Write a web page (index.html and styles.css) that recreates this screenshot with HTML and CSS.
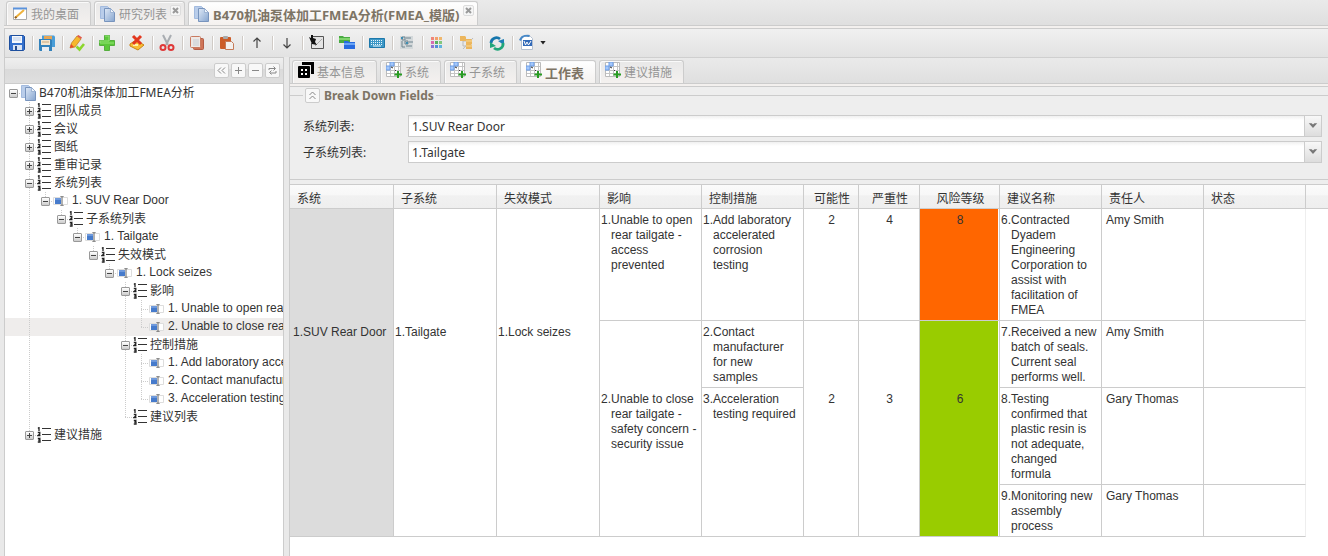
FILE: index.html
```
<!DOCTYPE html>
<html lang="zh-CN">
<head>
<meta charset="utf-8">
<title>FMEA</title>
<link rel="stylesheet" href="styles.css">
</head>
<body>
<svg class="defs" width="0" height="0" aria-hidden="true">
  <defs>
    <linearGradient id="page-blue" x1="0" y1="0" x2="1" y2="1"><stop offset="0" stop-color="#dfe9f7"/><stop offset="1" stop-color="#86a5cf"/></linearGradient>
    <symbol id="pages" viewBox="0 0 16 16">
      <path d="M.5.500h7l3 3v9h-10z" fill="#b9cdea" stroke="#a3bbdf"/>
      <path d="M4.500 2.500h6l4 4v9h-10z" fill="url(#page-blue)" stroke="#7894bd"/>
      <path d="M10.500 2.500v4h4z" fill="#eef4fb" stroke="#8aa4c8" stroke-width=".7"/>
    </symbol>
    <symbol id="list" viewBox="0 0 16 16">
      <path d="M1 1.500l1-1V4M.8 5.500h2V7L1 8.500h2.500M.8 11.500h2L2 13h1v2H.8" fill="none" stroke="#222" stroke-width="1.300"/>
      <path d="M5 1.500h9M5 7.500h9M5 13.500h9" stroke="#333" stroke-width="1.200"/>
    </symbol>
    <symbol id="field" viewBox="0 0 16 16">
      <path d="M.5 4.500h14v7H.5z" fill="#fff" stroke="#ddd"/>
      <path d="M2 5h6v6H2z" fill="#467bcc"/><path d="M2 5h6v2H2z" fill="#6e99dc"/>
      <path d="M7.500 3.500h1l.5.5.5-.5h1M9 4v8M7.500 12.500h1l.5-.5.5.5h1" fill="none" stroke="#666"/>
    </symbol>
    <symbol id="grid" viewBox="0 0 16 16">
      <path d="M.5.500h14v14H.5z" fill="#fff" stroke="#bbb"/>
      <path d="M4.500 1v13M8.500 1v13M12.500 1v13M1 4.500h13M1 8.500h13M1 11.500h13" stroke="#c5c5c5"/>
      <path d="M4 0h4v4H4zM0 4h4v4H0z" fill="#a4c8fb" stroke="#6d9de6"/>
      <path d="M5 5l2 1M9 8l1 1" stroke="#333"/>
      <path d="M11 9h2v2.500h3v2h-3V16h-2v-2.500H8.500v-2H11z" fill="#289b22"/>
    </symbol>
  </defs>
</svg>

<div class="app">
  <nav class="tabs outer-tabs">
    <button class="tab"><svg class="icon" viewBox="0 0 16 16"><path d="M1.500 2.500h13v11h-13z" fill="#fff" stroke="#aaa"/><path d="M1 1.500h14v2H1z" fill="#5a93dc"/><path d="M3 12l9-8" stroke="#efb23c" stroke-width="2"/><path d="M3 12l1.500-1.300" stroke="#8a5a28" stroke-width="2"/></svg><span>我的桌面</span></button>
    <button class="tab closable"><svg class="icon"><use href="#pages"/></svg><span>研究列表</span><i class="close"><svg viewBox="0 0 9 9"><path d="M2 2l5 5M7 2L2 7"/></svg></i></button>
    <button class="tab closable active"><svg class="icon"><use href="#pages"/></svg><span>B470机油泵体加工FMEA分析(FMEA_模版)</span><i class="close"><svg viewBox="0 0 9 9"><path d="M2 2l5 5M7 2L2 7"/></svg></i></button>
  </nav>
  <div class="strip"></div>

  <div class="toolbar" role="toolbar">
    <button aria-label="保存"><svg class="icon" viewBox="0 0 16 16"><path d="M.5 1.500q0-1 1-1h13l1 1v13l-1 1h-13l-1-1z" fill="#3470cd" stroke="#1d4f9e"/><path d="M3 1h10v7H3z" fill="#f5f8fc"/><path d="M4 3h8M4 5h8" stroke="#b8cbe8"/><path d="M4 10h9v5H4z" fill="#dbe5f4"/><path d="M6 11h2v4H6z" fill="#274c8c"/></svg></button><i></i>
    <button aria-label="另存为"><svg class="icon" viewBox="0 0 16 16"><path d="M3 .5h12l1 1V12H3z" fill="#4a9ed8"/><path d="M5 1h8v4H5z" fill="#e7a553"/><path d="M0 4h12l1 1v11H1l-1-1z" fill="#3382bb"/><path d="M2 5h9v5H2z" fill="#f3e6d0"/><path d="M3 12h7v4H3z" fill="#e8edf2"/><path d="M3 7h7" stroke="#c9a77a"/></svg></button><i></i>
    <button aria-label="编辑"><svg class="icon" viewBox="0 0 16 16"><path d="M1 13l1.500-5L8 1l4 3-6 8z" fill="#f6b72d" stroke="#b97a1a" stroke-width=".7"/><path d="M8 1l1.500-1L13 2.500 12 4z" fill="#e2574a"/><path d="M1 13l1-4 3 3z" fill="#e8472d"/><path d="M7.500 11.500l3 3L15 9" fill="none" stroke="#8cd62d" stroke-width="2.600"/></svg></button><i></i>
    <button aria-label="新增"><svg class="icon" viewBox="0 0 16 16"><path d="M5.500.500h5v5h5v5h-5v5h-5v-5h-5v-5h5z" fill="#5cc83b" stroke="#55ae3e"/><path d="M6 1h4v5H1V8h14" fill="none" stroke="#93e376"/></svg></button><i></i>
    <button aria-label="删除"><svg class="icon" viewBox="0 0 16 16"><path d="M1 9l6-4 8 5-6 5-8-4z" fill="#f8bf35" stroke="#c88317"/><path d="M4 10h5" stroke="#fff2a8" stroke-width="2"/><path d="M4 1l8 8M12 1L4 9" stroke="#e3371e" stroke-width="3"/></svg></button><i></i>
    <button aria-label="剪切"><svg class="icon" viewBox="0 0 16 16"><path d="M4 0l5 10M12 0L7 10" stroke="#a9adb2" stroke-width="2"/><circle cx="4" cy="12.500" r="2.500" fill="none" stroke="#df3838" stroke-width="2"/><circle cx="12" cy="12.500" r="2.500" fill="none" stroke="#df3838" stroke-width="2"/></svg></button><i></i>
    <button aria-label="复制"><svg class="icon" viewBox="0 0 16 16"><rect x="4.500" y="3.500" width="10" height="11" rx="1" fill="#cf7558" stroke="#b35c45"/><rect x="1.500" y="1.500" width="10" height="11" rx="1" fill="#eee8e5" stroke="#c97b61"/><path d="M4 4h6v7H4z" fill="#d9dbdd"/></svg></button><i></i>
    <button aria-label="粘贴"><svg class="icon" viewBox="0 0 16 16"><rect x="1" y="2" width="11" height="12" rx="1" fill="#cc5c28"/><rect x="4" y="1" width="5" height="3" rx="1" fill="#a9a9a9"/><path d="M6.500 6.500h6l2 2v6h-8z" fill="#f3f0ee" stroke="#c57b59"/></svg></button><i></i>
    <button aria-label="上移"><svg class="icon" viewBox="0 0 16 16"><path d="M8 13V3M4.500 6.500L8 3l3.500 3.500" fill="none" stroke="#444" stroke-width="1.200"/></svg></button><i></i>
    <button aria-label="下移"><svg class="icon" viewBox="0 0 16 16"><path d="M8 3v10M4.500 9.500L8 13l3.500-3.500" fill="none" stroke="#444" stroke-width="1.200"/></svg></button><i></i>
    <button aria-label="选择"><svg class="icon" viewBox="0 0 16 16"><path d="M3 1.500h11.500v12h-12V8" fill="#e4e4e4" stroke="#555"/><path d="M13 4l-7 7" stroke="#aaa"/><path d="M0 2l2 1V0h2v3l3 1-1 3 2 3-5-1z" fill="#111"/></svg></button><i></i>
    <button aria-label="层叠"><svg class="icon" viewBox="0 0 16 16"><path d="M0 1h4l1 1h6v6H0z" fill="#49ab42"/><path d="M0 3h11v2H0z" fill="#80d46c"/><path d="M5 6h4l1 1h6v7H5z" fill="#286be0"/><path d="M5 8h11v2H5z" fill="#69a4f5"/></svg></button><i></i>
    <button aria-label="键盘"><svg class="icon" viewBox="0 0 16 16"><path d="M.5 3.500h15v9H.5z" fill="#3c97c6" stroke="#1c78ab"/><path d="M2 5.500h12M2 7.500h12M2 9.500h12" stroke="#e7f6fd" stroke-dasharray="1 1"/><path d="M4 11h8" stroke="#e7f6fd"/></svg></button><i></i>
    <button aria-label="结构"><svg class="icon" viewBox="0 0 16 16"><path d="M1 1h13v13H1z" fill="#d3d8da"/><path d="M3 2h3v3H3zM7 3h5M6 6h3v3H6zM10 7h4M3 6v6h3M7 11h6" fill="none" stroke="#6e838e"/><path d="M2 2h2v2H2zM7 7h2v2H7z" fill="#3e8eb3"/></svg></button><i></i>
    <button aria-label="颜色"><svg class="icon" viewBox="0 0 16 16"><path fill="#f08678" d="M2 2h3v3H2z"/><path fill="#f3a06b" d="M6 2h3v3H6z"/><path fill="#efb76d" d="M10 2h3v3h-3z"/><path fill="#d86bb0" d="M2 6h3v3H2z"/><path fill="#58b264" d="M6 6h3v3H6z"/><path fill="#83c77c" d="M10 6h3v3h-3z"/><path fill="#8f75d4" d="M2 10h3v3H2z"/><path fill="#528fd8" d="M6 10h3v3H6z"/><path fill="#60b3de" d="M10 10h3v3h-3z"/></svg></button><i></i>
    <button aria-label="关系"><svg class="icon" viewBox="0 0 16 16"><path d="M4 4v7h6M4 6h6M14 3L4 14" fill="none" stroke="#bbb"/><path d="M1 1h5l1 1v4H1zM7 4h5l1 1v4H7zM7 9h5l1 1v4H7z" fill="#ecb65d"/><path d="M7 6h6M7 11h6" stroke="#f8d896"/></svg></button><i></i>
    <button aria-label="刷新"><svg class="icon" viewBox="0 0 16 16"><path d="M2 8a5.500 5.500 0 019-4" fill="none" stroke="#1676ad" stroke-width="2.800"/><path d="M15 4v6L9 6z" fill="#1f7fb6"/><path d="M14 8a5.500 5.500 0 01-9 5" fill="none" stroke="#20a67a" stroke-width="2.800"/><path d="M1 13V7l6 4z" fill="#20a67a"/></svg></button><i></i>
    <button class="menu" aria-label="导出 Word"><svg class="icon" viewBox="0 0 16 16"><path d="M2.500 1.500h9l2 2v11h-11z" fill="#fff" stroke="#b3bfd0"/><path d="M0 5Q2-1 11 0l-1 2Q4 0 2 6z" fill="#4688c8"/><path d="M4 5h9v6H4z" fill="#3169b8"/><path d="M5 6l1.500 4L8 7l1.500 3L12 6" fill="none" stroke="#fff"/></svg><b class="caret"></b></button>
  </div>

  <div class="work">
    <aside class="side">
      <header class="tools">
        <button aria-label="折叠"><svg viewBox="0 0 13 13"><path d="M6 3.500l-3 3 3 3M10 3.500l-3 3 3 3"/></svg></button>
        <button aria-label="全部展开"><svg viewBox="0 0 13 13"><path d="M6.500 3v7M3 6.500h7"/></svg></button>
        <button aria-label="全部收起"><svg viewBox="0 0 13 13"><path d="M3 6.500h7"/></svg></button>
        <button aria-label="刷新"><svg viewBox="0 0 13 13"><path d="M3 6V4.500h6M7.500 2.500l2 2-2 2M10 7v2H4M5.500 6.500l-2 2 2 2"/></svg></button>
      </header>
      <ul class="tree">
        <li><button class="knob minus last top" aria-label="收起"></button><svg class="icon"><use href="#pages"/></svg><span class="root">B470机油泵体加工FMEA分析</span></li>
        <li><i></i><button class="knob plus" aria-label="展开"></button><svg class="icon"><use href="#list"/></svg><span>团队成员</span></li>
        <li><i></i><button class="knob plus" aria-label="展开"></button><svg class="icon"><use href="#list"/></svg><span>会议</span></li>
        <li><i></i><button class="knob plus" aria-label="展开"></button><svg class="icon"><use href="#list"/></svg><span>图纸</span></li>
        <li><i></i><button class="knob plus" aria-label="展开"></button><svg class="icon"><use href="#list"/></svg><span>重审记录</span></li>
        <li><i></i><button class="knob minus" aria-label="收起"></button><svg class="icon"><use href="#list"/></svg><span>系统列表</span></li>
        <li><i></i><i class="v"></i><button class="knob minus last" aria-label="收起"></button><svg class="icon"><use href="#field"/></svg><span class="item">1. SUV Rear Door</span></li>
        <li><i></i><i class="v"></i><i></i><button class="knob minus last" aria-label="收起"></button><svg class="icon"><use href="#list"/></svg><span>子系统列表</span></li>
        <li><i></i><i class="v"></i><i></i><i></i><button class="knob minus last" aria-label="收起"></button><svg class="icon"><use href="#field"/></svg><span class="item">1. Tailgate</span></li>
        <li><i></i><i class="v"></i><i></i><i></i><i></i><button class="knob minus last" aria-label="收起"></button><svg class="icon"><use href="#list"/></svg><span>失效模式</span></li>
        <li><i></i><i class="v"></i><i></i><i></i><i></i><i></i><button class="knob minus last" aria-label="收起"></button><svg class="icon"><use href="#field"/></svg><span class="item">1. Lock seizes</span></li>
        <li><i></i><i class="v"></i><i></i><i></i><i></i><i></i><i></i><button class="knob minus" aria-label="收起"></button><svg class="icon"><use href="#list"/></svg><span>影响</span></li>
        <li><i></i><i class="v"></i><i></i><i></i><i></i><i></i><i></i><i class="v"></i><i class="elbow"></i><svg class="icon"><use href="#field"/></svg><span class="item">1. Unable to open rear tailgate - access prevented</span></li>
        <li class="selected"><i></i><i class="v"></i><i></i><i></i><i></i><i></i><i></i><i class="v"></i><i class="elbow last"></i><svg class="icon"><use href="#field"/></svg><span class="item">2. Unable to close rear tailgate - safety concern</span></li>
        <li><i></i><i class="v"></i><i></i><i></i><i></i><i></i><i></i><button class="knob minus" aria-label="收起"></button><svg class="icon"><use href="#list"/></svg><span>控制措施</span></li>
        <li><i></i><i class="v"></i><i></i><i></i><i></i><i></i><i></i><i class="v"></i><i class="elbow"></i><svg class="icon"><use href="#field"/></svg><span class="item">1. Add laboratory accelerated corrosion testing</span></li>
        <li><i></i><i class="v"></i><i></i><i></i><i></i><i></i><i></i><i class="v"></i><i class="elbow"></i><svg class="icon"><use href="#field"/></svg><span class="item">2. Contact manufacturer for new samples</span></li>
        <li><i></i><i class="v"></i><i></i><i></i><i></i><i></i><i></i><i class="v"></i><i class="elbow last"></i><svg class="icon"><use href="#field"/></svg><span class="item">3. Acceleration testing required</span></li>
        <li><i></i><i class="v"></i><i></i><i></i><i></i><i></i><i></i><i class="elbow last"></i><svg class="icon"><use href="#list"/></svg><span>建议列表</span></li>
        <li><i></i><button class="knob plus last" aria-label="展开"></button><svg class="icon"><use href="#list"/></svg><span>建议措施</span></li>
      </ul>
    </aside>

    <main class="main">
      <nav class="tabs inner-tabs">
        <button class="tab"><svg class="icon" viewBox="0 0 16 16"><path d="M4 0h12v12h-3V3H4z" fill="#000"/><rect y="4" width="12" height="12" rx="1" fill="#000"/><path d="M3 7h2v2H3zM7 7h2v2H7zM3 11h2v2H3zM7 11h2v2H7z" fill="#fff"/></svg><span>基本信息</span></button>
        <button class="tab"><svg class="icon"><use href="#grid"/></svg><span>系统</span></button>
        <button class="tab"><svg class="icon"><use href="#grid"/></svg><span>子系统</span></button>
        <button class="tab active"><svg class="icon"><use href="#grid"/></svg><span>工作表</span></button>
        <button class="tab"><svg class="icon"><use href="#grid"/></svg><span>建议措施</span></button>
      </nav>
      <div class="strip"></div>
      <fieldset class="filters">
        <legend><button class="fold" aria-label="折叠"><svg viewBox="0 0 13 13"><path d="M3.500 6l3-3 3 3M3.500 10l3-3 3 3"/></svg></button>Break Down Fields</legend>
        <div class="field"><label for="sys">系统列表:</label><div class="combo"><select id="sys"><option>1.SUV Rear Door</option></select><svg viewBox="0 0 17 20"><path d="M4 7h3l1.500 1.500L10 7h3l-4.500 5z"/></svg></div></div>
        <div class="field"><label for="sub">子系统列表:</label><div class="combo"><select id="sub"><option>1.Tailgate</option></select><svg viewBox="0 0 17 20"><path d="M4 7h3l1.500 1.500L10 7h3l-4.500 5z"/></svg></div></div>
      </fieldset>
      <div class="sheet">
        <table>
          <colgroup><col class="w104"><col class="w103"><col class="w103"><col class="w102"><col class="w102"><col class="w55"><col class="w61"><col class="w80"><col class="w102"><col class="w102"><col class="w102"><col></colgroup>
          <thead>
            <tr><th>系统</th><th>子系统</th><th>失效模式</th><th>影响</th><th>控制措施</th><th class="mid">可能性</th><th class="mid">严重性</th><th class="mid">风险等级</th><th>建议名称</th><th>责任人</th><th>状态</th><th class="rest"></th></tr>
          </thead>
          <tbody>
            <tr><td class="open picked"></td><td class="open"></td><td class="open"></td><td>1.Unable to open rear tailgate - access prevented</td><td>1.Add laboratory accelerated corrosion testing</td><td class="num">2</td><td class="num">4</td><td class="num high">8</td><td>6.Contracted Dyadem Engineering Corporation to assist with facilitation of FMEA</td><td class="who">Amy Smith</td><td class="state"></td><td class="rest"></td></tr>
            <tr><td class="open picked">1.SUV Rear Door</td><td class="open">1.Tailgate</td><td class="open">1.Lock seizes</td><td class="open"></td><td>2.Contact manufacturer for new samples</td><td class="open"></td><td class="open"></td><td class="open low"></td><td>7.Received a new batch of seals. Current seal performs well.</td><td class="who">Amy Smith</td><td class="state"></td><td class="rest"></td></tr>
            <tr><td class="open picked"></td><td class="open"></td><td class="open"></td><td class="open">2.Unable to close rear tailgate - safety concern - security issue</td><td class="open">3.Acceleration testing required</td><td class="num open">2</td><td class="num open">3</td><td class="num open low">6</td><td>8.Testing confirmed that plastic resin is not adequate, changed formula</td><td class="who">Gary Thomas</td><td class="state"></td><td class="rest"></td></tr>
            <tr><td class="picked"></td><td></td><td></td><td></td><td></td><td></td><td></td><td class="low"></td><td>9.Monitoring new assembly process</td><td class="who">Gary Thomas</td><td class="state"></td><td class="rest"></td></tr>
          </tbody>
        </table>
      </div>
    </main>
  </div>
</div>
</body>
</html>
```
FILE: styles.css
```
*, *::before { box-sizing: border-box; }

body {
  margin: 0;
  background: #e9e9e9;
  color: #333;
  font: 12px/18px "Noto Sans", "Noto Sans CJK SC", sans-serif;
}

button { border: 0; padding: 0; background: none; font: inherit; color: inherit; }
i { font-style: normal; }
.defs { display: block; height: 0; }
.icon { width: 16px; height: 16px; flex: none; overflow: visible; }

.app { display: flex; flex-direction: column; min-height: 100vh; padding-left: 4px; }

/* Tab strips */
.tabs { display: flex; background: linear-gradient(#eaeaea, #dfdfdf); }
.outer-tabs { height: 25px; padding: 1px 0 0 2px; gap: 3px; }
.inner-tabs { height: 26px; padding: 2px 0 0 2px; gap: 3px; border-top: 1px solid #cfcfcf; }
.tab {
  display: flex;
  align-items: center;
  gap: 3px;
  padding: 0 11px 0 5px;
  border: 1px solid #ccc;
  border-bottom: 0;
  border-radius: 3px 3px 0 0;
  background: linear-gradient(#e8e8e8, #f4f1ef);
  box-shadow: inset 1px 1px #fafafa;
  color: #959595;
  white-space: nowrap;
}
.tab span { padding-top: 2px; }
.tab.active { background: linear-gradient(#fff, #f4f1ef); color: #7d7465; font-size: 13px; font-weight: bold; }
.closable { padding: 0 3px 0 5px; }
.close {
  align-self: flex-start;
  width: 11px;
  height: 11px;
  margin-top: 3px;
  border: 1px solid #ddd;
  border-radius: 2px;
  background: #f6f6f6;
}
.close svg { display: block; width: 9px; height: 9px; fill: none; stroke: #999; stroke-width: 2; }
.strip { height: 4px; border: 1px solid #ccc; border-width: 1px 0; background: #f3f0ee; }
.inner-tabs .icon { margin-bottom: 4px; }

/* Toolbar */
.toolbar {
  display: flex;
  align-items: center;
  height: 28px;
  padding-bottom: 1px;
  border-left: 1px solid #ccc;
  background: linear-gradient(#f0f0f0, #e2e2e2);
}
.toolbar button { display: flex; align-items: center; width: 26px; height: 24px; padding-left: 4px; }
.toolbar i { width: 2px; height: 14px; margin: 0 1px; border-left: 1px solid #d0cbc6; background: #fff; }
.toolbar .menu { width: 36px; gap: 5px; }
.caret { width: 6px; height: 4px; flex: none; background: #222; clip-path: polygon(0 0, 100% 0, 50% 100%); }

/* Work area */
.work { display: flex; flex: 1; border-left: 1px solid #ccc; }
.side {
  flex: none;
  width: 279px;
  overflow: hidden;
  border-top: 1px solid #ccc;
  border-right: 1px solid #ccc;
  background: #fff;
}
.tools {
  display: flex;
  justify-content: flex-end;
  align-items: center;
  gap: 2px;
  height: 26px;
  padding: 0 3px 0 0;
  border-bottom: 1px solid #ccc;
  background: linear-gradient(#efefef, #e5e5e5 45%, #dadada 46%, #dfdfdf);
}
.tools button, .fold {
  width: 15px;
  height: 15px;
  border: 1px solid #ccc;
  border-radius: 2px;
  background: #f8f8f8;
}
.tools svg, .fold svg { display: block; width: 13px; height: 13px; fill: none; stroke: #888; }

.tree { margin: 0; padding: 0; list-style: none; font-family: "Liberation Sans", "Noto Sans CJK SC", sans-serif; }
.tree li { display: flex; align-items: center; height: 18px; white-space: nowrap; }
.tree li.selected { background: #efedec; }
.tree span { padding-left: 1px; }
.tree .item { padding: 0 0 2px 3px; }
.tree .root { padding-left: 2px; font-family: "Noto Sans", "Noto Sans CJK SC", sans-serif; }
.tree i, .knob { flex: none; width: 16px; height: 18px; }
.v, .knob, .elbow {
  --dots-v: repeating-linear-gradient(#ccc 0 1px, transparent 1px 2px);
  --dots-h: repeating-linear-gradient(90deg, #ccc 0 1px, transparent 1px 2px);
  background-repeat: no-repeat;
}
.v { background-image: var(--dots-v); background-size: 1px 100%; background-position: 8px 0; }
.knob, .elbow {
  background-image: var(--dots-v), var(--dots-h);
  background-size: 1px 100%, 8px 1px;
  background-position: 8px 0, 8px 9px;
}
.knob.last, .elbow.last { background-size: 1px 50%, 8px 1px; }
.knob.top { background-size: 0 0, 8px 1px; }
.knob { display: grid; place-items: center; padding-left: 1px; }
.knob::before {
  content: "";
  width: 9px;
  height: 9px;
  border: 1px solid #999;
  border-radius: 1px;
  background: linear-gradient(#444, #444) center / 5px 1px no-repeat, linear-gradient(#fff, #ccc);
}
.knob.plus::before {
  background: linear-gradient(#444, #444) center / 5px 1px no-repeat, linear-gradient(#444, #444) center / 1px 5px no-repeat, linear-gradient(#fff, #ccc);
}

.main {
  display: flex;
  flex: 1;
  flex-direction: column;
  min-width: 0;
  margin-left: 5px;
  border-left: 1px solid #ccc;
  background: #eee;
}

/* Filter form */
.filters {
  min-width: 0;
  margin: 0 0 4px;
  padding: 11px 6px 12px 13px;
  border: 1px solid #ccc;
  border-width: 1px 0;
}
.filters legend {
  display: flex;
  align-items: center;
  gap: 4px;
  height: 17px;
  padding: 0 2px;
  color: #7d7465;
  font-weight: bold;
}
.field { display: flex; align-items: center; margin-bottom: 4px; }
.field label { flex: none; width: 105px; padding-top: 2px; }
.combo { position: relative; flex: 1; height: 22px; }
.combo select {
  width: 100%;
  height: 22px;
  padding: 2px 20px 0 3px;
  border: 1px solid #ccc;
  border-radius: 0;
  appearance: none;
  background: linear-gradient(#f0f0f0, #fff 4px);
  color: #333;
  font: inherit;
}
.combo svg {
  position: absolute;
  top: 1px;
  right: 1px;
  width: 17px;
  height: 20px;
  border-left: 1px solid #ccc;
  background: linear-gradient(#f8f8f8, #ddd);
  fill: #777;
  pointer-events: none;
}

/* Worksheet */
.sheet { flex: 1; border-top: 1px solid #ccc; background: #fff; }
table {
  width: 100%;
  table-layout: fixed;
  border-collapse: separate;
  border-spacing: 0;
  font-family: "Liberation Sans", "Noto Sans CJK SC", sans-serif;
}
.w104 { width: 104px; }
.w103 { width: 103px; }
.w102 { width: 102px; }
.w80 { width: 80px; }
.w61 { width: 61px; }
.w55 { width: 55px; }
th {
  height: 24px;
  padding: 5px 0 0 7px;
  border: 1px solid #ccc;
  border-width: 0 1px 1px 0;
  background: linear-gradient(#fbfbfb, #f7f7f7 45%, #f1f1f1 46%, #eee);
  font-weight: normal;
  text-align: left;
}
th.mid { padding-left: 2px; text-align: center; }
td {
  padding: 4px 3px 2px 11px;
  border: 1px solid #ccc;
  border-width: 0 1px 1px 0;
  line-height: 15px;
  text-indent: -10px;
  vertical-align: top;
}
td.open { border-bottom: 0; }
td.picked { padding-left: 13px; padding-right: 0; background: #dcdcdc; white-space: nowrap; }
td.num { padding-left: 4px; text-align: center; text-indent: 0; }
td.who { padding-left: 4px; text-indent: 0; }
td.high { background: #f60; box-shadow: inset -1px 0 #fff; }
td.low { background: #9c0; box-shadow: inset -1px 0 #fff; }
td.state { border-right-color: #eee; }
th.rest { border-right: 0; }
td.rest { border: 0; }
```
